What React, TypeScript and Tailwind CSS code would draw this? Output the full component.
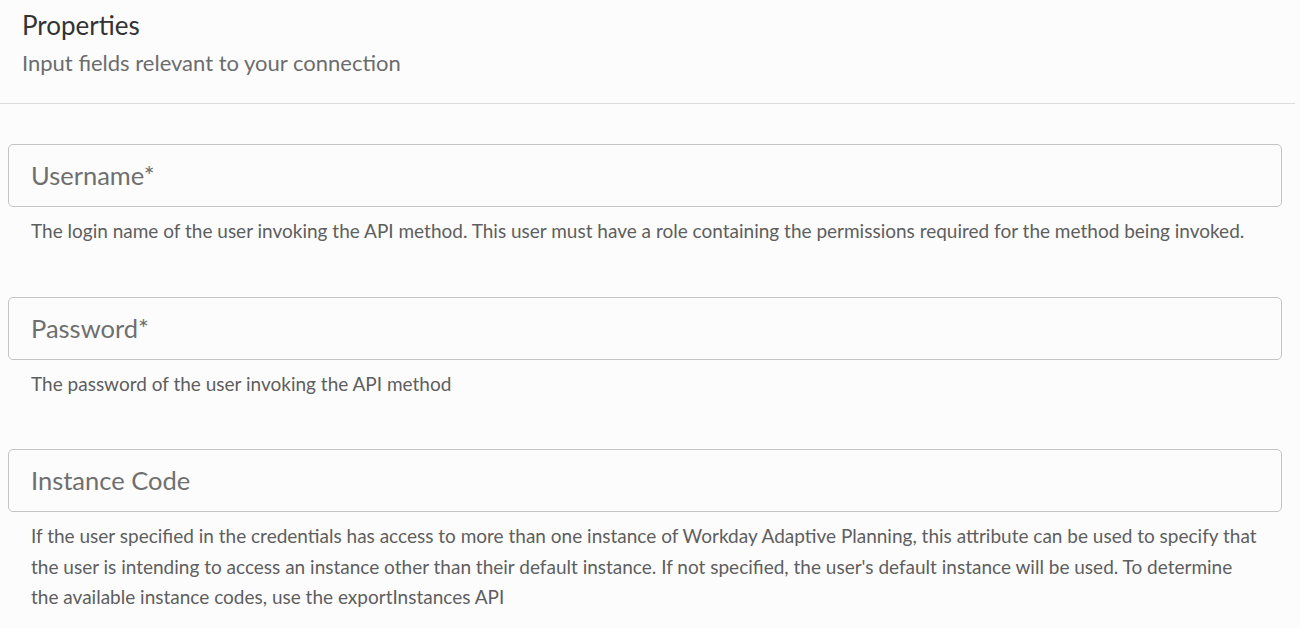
import React from 'react';

const FIELDS = [
  {
    id: 'username',
    label: 'Username*',
    help: 'The login name of the user invoking the API method. This user must have a role containing the permissions required for the method being invoked.',
  },
  {
    id: 'password',
    label: 'Password*',
    help: 'The password of the user invoking the API method',
  },
  {
    id: 'instance',
    label: 'Instance Code',
    help: "If the user specified in the credentials has access to more than one instance of Workday Adaptive Planning, this attribute can be used to specify that the user is intending to access an instance other than their default instance. If not specified, the user's default instance will be used. To determine the available instance codes, use the exportInstances API",
  },
];

const App: React.FC = () => {
  return (
    <div className="w-[1300px] h-[628px] overflow-hidden bg-[#fcfcfc] font-['Lato',sans-serif] [font-feature-settings:'calt'_0]">
      <div className="w-[1295px]">
        <div className="pl-[22px] pt-[9px] h-[104px] border-b border-[#dcdcdc]">
          <h2 className="text-[26px] leading-[32px] text-[#333333]">Properties</h2>
          <p className="mt-[7px] text-[22px] leading-[30px] text-[#6c6c6c]">Input fields relevant to your connection</p>
        </div>
        <div className="pl-[8px] pt-[40px] flex flex-col gap-[50px]">
          {FIELDS.map((field) => (
            <div key={field.id} className="w-[1274px]">
              <div className="h-[63px] border border-[#c4c4c4] rounded-[5px] flex items-center px-[22px]">
                <span className="text-[25.5px] text-[#6f6f6f]">{field.label}</span>
              </div>
              <p className="mt-[9px] px-[23px] text-[19px] leading-[30.5px] text-[#5e5e5e]">{field.help}</p>
            </div>
          ))}
        </div>
      </div>
    </div>
  );
};

export default App;
